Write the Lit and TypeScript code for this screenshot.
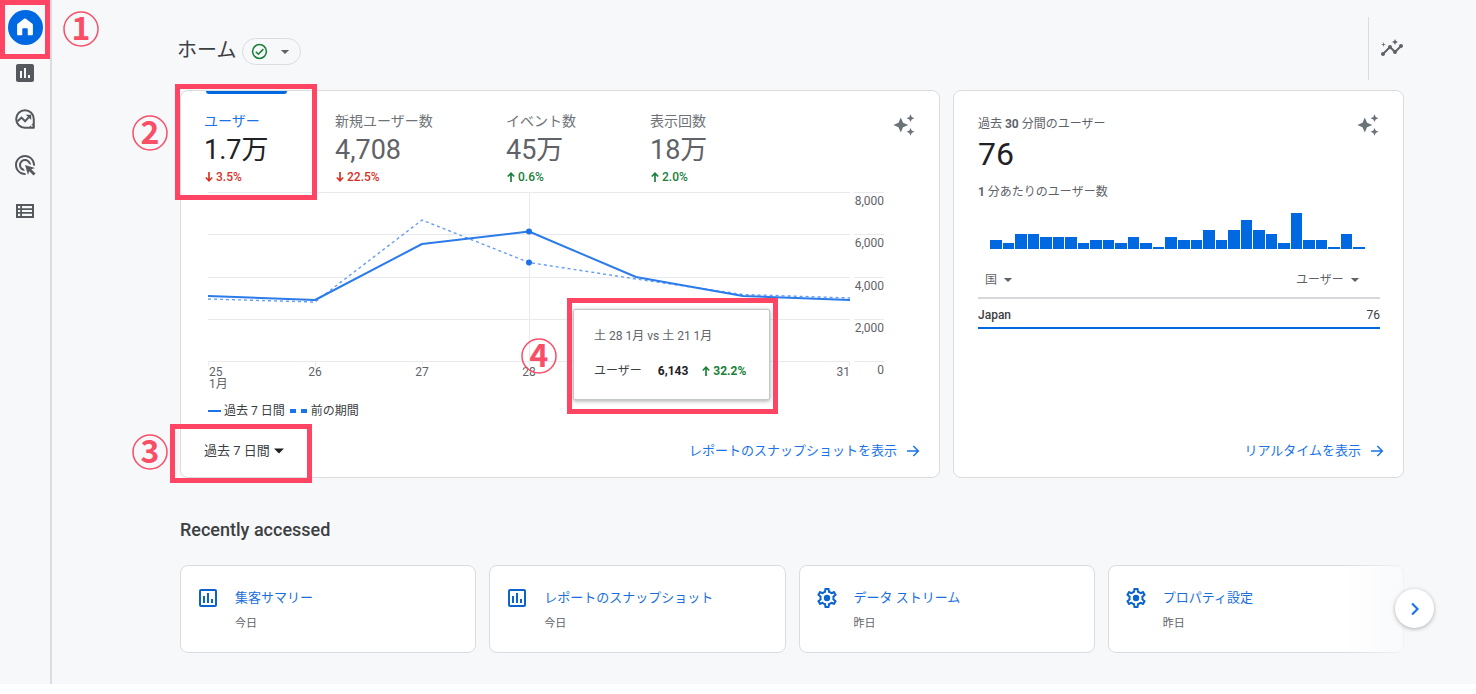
import { LitElement, html, css, svg } from "lit";
import { customElement } from "lit/decorators.js";
import { classMap } from "lit/directives/class-map.js";

const ICONS = {
  home: svg`<path fill-rule="evenodd" d="M12 2.6a1.6 1.6 0 0 1 1 .35l7 5.5c.4.3.6.75.6 1.25V20a1 1 0 0 1-1 1H15v-6.6a1 1 0 0 0-1-1h-4a1 1 0 0 0-1 1V21H4.4a1 1 0 0 1-1-1V9.7c0-.5.2-.95.6-1.25l7-5.5a1.6 1.6 0 0 1 1-.35z"/>`,
  reports: svg`<path d="M19 3H5c-1.1 0-2 .9-2 2v14c0 1.1.9 2 2 2h14c1.1 0 2-.9 2-2V5c0-1.1-.9-2-2-2zM9 17H7v-7h2v7zm4 0h-2V7h2v10zm4 0h-2v-3h2v3z"/>`,
  explore: svg`<path fill="none" stroke="currentColor" stroke-width="2" stroke-linejoin="round" d="M12 3.2a8.8 8.8 0 1 0 0 17.6h8.8V12A8.8 8.8 0 0 0 12 3.2z"/><path fill="none" stroke="currentColor" stroke-width="2" d="M4.5 14.2l4-3.6 3.6 3.6 4.2-4.6"/><path d="M12.8 7.7h5.4v5.4zM20.8 15.5v5.3h-5.3z"/><circle cx="18.8" cy="18.8" r=".9" fill="#f7f8fa"/>`,
  ads: svg`<path d="M11.71 17.99C8.53 17.84 6 15.22 6 12c0-3.31 2.69-6 6-6 3.22 0 5.84 2.53 5.99 5.71l-2.1-.63C15.48 9.31 13.89 8 12 8c-2.21 0-4 1.79-4 4 0 1.89 1.31 3.48 3.08 3.89l.63 2.1zM22 12c0 .3-.01.6-.04.9l-1.97-.59C20 12.21 20 12.1 20 12c0-4.42-3.58-8-8-8s-8 3.58-8 8 3.58 8 8 8c.1 0 .21 0 .31-.01l.59 1.97c-.3.03-.6.04-.9.04C6.48 22 2 17.52 2 12S6.48 2 12 2s10 4.48 10 10zm-3.77 4.26L22 15l-10-3 3 10 1.26-3.77 4.27 4.27 1.98-1.98-4.28-4.26z"/>`,
  table: svg`<path fill-rule="evenodd" d="M3 5h18v14H3zM5 7v2.2h2.2V7zm4 0v2.2h10V7zM5 10.9v2.2h2.2v-2.2zm4 0v2.2h10v-2.2zM5 14.8V17h2.2v-2.2zm4 0V17h10v-2.2z"/>`,
  sparkle: svg`<path d="M8.800 4.500l2.300 5.200 5.200 2.300-5.200 2.300-2.300 5.200-2.300-5.200L1.300 12l5.200-2.300zM18.500 1.300l1.200 2.700 2.700 1.200-2.700 1.200-1.200 2.700-1.200-2.700-2.700-1.200 2.700-1.200zM18.500 14.900l1.200 2.700 2.700 1.200-2.700 1.200-1.200 2.700-1.200-2.700-2.700-1.200 2.700-1.200z"/>`,
  insights: svg`<path d="M21 8c-1.450 0-2.260 1.440-1.930 2.510l-3.550 3.560c-.3-.09-.74-.09-1.040 0l-2.550-2.550C12.270 10.450 11.460 9 10 9c-1.450 0-2.270 1.440-1.930 2.520l-4.560 4.550C2.440 15.740 1 16.550 1 18c0 1.100.9 2 2 2 1.450 0 2.260-1.440 1.930-2.510l4.550-4.560c.3.09.74.09 1.040 0l2.550 2.550C12.730 16.550 13.540 18 15 18c1.450 0 2.270-1.440 1.930-2.520l3.560-3.550C21.560 12.260 23 11.450 23 10c0-1.100-.9-2-2-2z"/><path d="M15 9l.94-2.070L18 6l-2.060-.93L15 3l-.92 2.070L12 6l2.080.93zM3.500 11L4 9l2-.5L4 8l-.5-2L3 8l-2 .5L3 9z"/>`,
  chartOutline: svg`<path d="M9 17H7v-7h2v7zm4 0h-2V7h2v10zm4 0h-2v-4h2v4z"/><rect x="4" y="4" width="16" height="16" rx="1" fill="none" stroke="currentColor" stroke-width="2"/>`,
  gear: svg`<path d="M19.430 12.980c.04-.32.07-.64.07-.98 0-.34-.03-.66-.07-.98l2.110-1.650c.19-.15.24-.42.12-.64l-2-3.460c-.09-.16-.26-.25-.44-.25-.06 0-.12.01-.17.03l-2.490 1c-.52-.4-1.080-.73-1.690-.98l-.38-2.650C14.460 2.180 14.250 2 14 2h-4c-.25 0-.46.18-.49.42l-.38 2.650c-.61.25-1.170.59-1.690.98l-2.490-1c-.06-.02-.12-.03-.18-.03-.17 0-.34.09-.43.25l-2 3.460c-.13.22-.07.49.12.64l2.110 1.650c-.04.32-.07.65-.07.98 0 .33.03.66.07.98l-2.110 1.650c-.19.15-.24.42-.12.64l2 3.460c.09.16.26.25.44.25.06 0 .12-.01.17-.03l2.490-1c.52.4 1.080.73 1.690.98l.38 2.650c.03.24.24.42.49.42h4c.25 0 .46-.18.49-.42l.38-2.650c.61-.25 1.170-.59 1.690-.98l2.490 1c.06.02.12.03.18.03.17 0 .34-.09.43-.25l2-3.460c.12-.22.07-.49-.12-.64l-2.110-1.650zm-1.980-1.710c.04.31.05.52.05.73 0 .21-.02.43-.05.73l-.14 1.130.89.7 1.080.84-.7 1.210-1.270-.51-1.040-.42-.9.68c-.43.32-.84.56-1.250.73l-1.060.43-.16 1.130-.2 1.350h-1.400l-.19-1.350-.16-1.130-1.060-.43c-.43-.18-.83-.41-1.230-.71l-.91-.7-1.060.43-1.270.51-.7-1.210 1.080-.84.89-.7-.14-1.130c-.03-.31-.05-.54-.05-.74s.02-.43.05-.73l.14-1.130-.89-.7-1.080-.84.7-1.210 1.270.51 1.040.42.9-.68c.43-.32.84-.56 1.250-.73l1.060-.43.16-1.130.2-1.350h1.390l.19 1.350.16 1.130 1.060.43c.43.18.83.41 1.230.71l.91.7 1.060-.43 1.270-.51.7 1.210-1.070.85-.89.7.14 1.130z"/><circle cx="12" cy="12" r="3.200"/>`,
  arrow: svg`<path fill="none" stroke="currentColor" stroke-width="2.200" d="M3 12h16.500M12.500 4.500L20 12l-7.500 7.500"/>`,
  chevron: svg`<path fill="none" stroke="currentColor" stroke-width="2.600" d="M8.500 5.500L15 12l-6.500 6.500"/>`,
  check: svg`<circle cx="12" cy="12" r="9.800" fill="none" stroke="currentColor" stroke-width="2.200"/><path fill="none" stroke="currentColor" stroke-width="2.200" d="M6.800 12.300l3.600 3.500 7-7.200"/>`,
  caret: svg`<path d="M2 7h20L12 17z"/>`,
  up: svg`<path d="M12 0l9 9.500-2.500 2.500-4.500-4V24h-4V8l-4.500 4L3 9.500z"/>`,
  down: svg`<path d="M12 24l9-9.500-2.500-2.500-4.500 4V0h-4v16l-4.500-4L3 14.500z"/>`,
};

type IconName = keyof typeof ICONS;

const icon = (name: IconName, cls = "") =>
  html`<svg class="icon ${cls}" viewBox="0 0 24 24" fill="currentColor" aria-hidden="true">${ICONS[name]}</svg>`;

const NAV: { icon: IconName; label: string }[] = [
  { icon: "reports", label: "レポート" },
  { icon: "explore", label: "探索" },
  { icon: "ads", label: "広告" },
  { icon: "table", label: "設定" },
];

const METRICS = [
  { label: "ユーザー", value: "1.7万", delta: "3.5%", up: false },
  { label: "新規ユーザー数", value: "4,708", delta: "22.5%", up: false },
  { label: "イベント数", value: "45万", delta: "0.6%", up: true },
  { label: "表示回数", value: "18万", delta: "2.0%", up: true },
];

const PER_MINUTE = [
  9, 6, 15, 15, 12, 12, 12, 6, 9, 9, 6, 12, 6, 2, 12, 9, 9, 19, 9, 19, 29, 19, 15, 6, 36, 9, 9, 2, 15, 2,
];

const RECENT: { icon: IconName; title: string; when: string }[] = [
  { icon: "chartOutline", title: "集客サマリー", when: "今日" },
  { icon: "chartOutline", title: "レポートのスナップショット", when: "今日" },
  { icon: "gear", title: "データ ストリーム", when: "昨日" },
  { icon: "gear", title: "プロパティ設定", when: "昨日" },
];

@customElement("app-root")
export class AppRoot extends LitElement {
  static styles = css`
    :host {
      display: block;
      font-family: Roboto, "Noto Sans CJK JP", sans-serif;
      font-size: 12px;
      line-height: 16px;
      color: #5f6368;
      background: #fff;
    }
    * { box-sizing: border-box; }
    button, select {
      font: inherit;
      color: inherit;
      background: none;
      border: 0;
      margin: 0;
      padding: 0;
      cursor: pointer;
    }
    select { appearance: none; }
    a { color: #1a73e8; text-decoration: none; }
    h1, h2, p { margin: 0; font-weight: 400; }
    .icon { display: block; flex: none; width: 24px; height: 24px; }
    .small { width: 10px; height: 10px; }
    .mid { width: 16px; height: 16px; }

    .page {
      display: grid;
      grid-template-columns: 52px minmax(0, 1fr);
      background: #f7f8fa;
    }
    .side {
      border-right: 2px solid #dadce0;
      padding-top: 4px;
      position: relative;
    }
    .nav { display: flex; flex-direction: column; }
    .nav-item {
      display: grid;
      place-items: center;
      height: 46px;
      color: #55595e;
    }
    .home-disc {
      display: grid;
      place-items: center;
      width: 35px;
      height: 35px;
      border-radius: 50%;
      background: #0069e1;
      color: #fff;
    }
    .home-disc .icon { width: 22px; height: 22px; }

    .main { padding: 17px 72px 31px 128px; }
    .head { display: flex; align-items: center; height: 63px; }
    .title {
      font-size: 20px;
      line-height: 28px;
      color: #3c4043;
      margin-left: -3px;
      padding-top: 3px;
    }
    .status {
      display: flex;
      align-items: center;
      gap: 12px;
      height: 27px;
      padding: 0 10px 0 8px;
      margin: 6px auto 0 6px;
      border: 1px solid #dadce0;
      border-radius: 14px;
    }
    .status .check { width: 17px; height: 17px; color: #188038; }
    .tools {
      display: flex;
      align-items: center;
      height: 63px;
      padding: 0 0 2px 11px;
      border-left: 1px solid #dadce0;
    }

    .cards {
      display: grid;
      grid-template-columns: minmax(0, 760fr) minmax(0, 451fr);
      gap: 13px;
      margin-top: 10px;
    }
    .card {
      position: relative;
      display: flex;
      flex-direction: column;
      background: #fff;
      border: 1px solid #dadce0;
      border-radius: 8px;
    }
    .overview { padding: 0 18px 16px 23px; }
    .realtime { padding: 25px 18px 16px 24px; }
    .card-head { display: flex; justify-content: space-between; }
    .spark { color: #6b737a; }
    .overview .spark { margin: 22px 5px auto 0; }
    .metrics { display: grid; grid-template-columns: 131px 171px 144px auto; }
    .metric {
      display: flex;
      flex-direction: column;
      justify-self: start;
      text-align: left;
      padding: 20px 0 7px;
      position: relative;
      min-width: 83px;
    }
    .metric.on::before {
      content: "";
      position: absolute;
      inset: 0 0 auto 2px;
      height: 3px;
      border-radius: 0 0 3px 3px;
      background: #0069e1;
    }
    .metric-label { font-size: 14px; line-height: 20px; color: #6f7377; }
    .metric-value { font-size: 27px; line-height: 37px; padding-top: 1px; }
    .on .metric-label { color: #1a73e8; }
    .on .metric-value { color: #202124; }
    .delta {
      display: flex;
      align-items: center;
      gap: 2px;
      font-weight: 500;
      color: #d93025;
    }
    .delta.up { color: #188038; }

    .chart {
      position: relative;
      display: grid;
      grid-template-columns: minmax(0, 1fr) 30px;
      column-gap: 4px;
      margin: 0 37px 0 4px;
    }
    .plot { display: block; width: 100%; height: 170px; overflow: visible; }
    .y-axis { display: grid; grid-template-rows: 42px 43px 42px 42px 18px; text-align: right; }
    .y-axis span { border-top: 1px solid #e8eaed; }
    .x-axis {
      display: grid;
      grid-template-columns: repeat(12, minmax(0, 1fr));
      line-height: 12px;
      text-align: center;
      padding-top: 5px;
      margin-top: -18px;
    }
    .x-axis span { grid-column: span 2; }
    .x-axis .first { grid-column: span 1; text-align: left; padding-left: 1px; }
    .x-axis .last { grid-column: 12; text-align: right; }
    .tip {
      position: absolute;
      left: 54%;
      top: 117px;
      width: 197px;
      padding: 18px 20px 20px;
      background: #fff;
      border: 1px solid #c4c7ca;
      border-radius: 2px;
      box-shadow: 0 1px 4px rgba(0, 0, 0, 0.35);
    }
    .tip-row { display: flex; align-items: center; margin-top: 19px; color: #3c4043; }
    .tip-row b { margin: 0 13px 0 16px; color: #202124; }
    .tip-row .delta { font-weight: 700; }

    .legend { display: flex; align-items: center; gap: 3px; margin: 13px 0 0 4px; color: #3c4043; }
    .key { width: 13px; height: 2px; background: #1a73e8; }
    .key.dash {
      width: 17px;
      height: 4px;
      margin: 0 1px 0 2px;
      background: linear-gradient(90deg, #1a73e8 6px, transparent 6px 11px, #1a73e8 11px);
    }
    .foot {
      display: flex;
      align-items: center;
      justify-content: space-between;
      margin-top: auto;
      padding-top: 22px;
      font-size: 13px;
      line-height: 20px;
    }
    .pick { display: flex; align-items: center; gap: 5px; }
    .range { color: #3c4043; gap: 3px; }
    .range .icon { width: 12px; height: 12px; color: #202124; }
    .more { display: flex; align-items: center; gap: 8px; margin-left: auto; }

    .count { font-size: 32px; line-height: 44px; color: #202124; }
    .strong { font-weight: 700; }
    .realtime .card-head + p { margin-top: 8px; }
    .realtime .spark { margin: -3px 5px auto 0; }
    .bars {
      display: flex;
      align-items: flex-end;
      gap: 1px;
      height: 36px;
      margin: 13px 20px 0 12px;
    }
    .bar { flex: 1; background: #0069e1; }
    .places {
      width: calc(100% - 5px);
      border-collapse: collapse;
      margin-top: 23px;
    }
    .places th { padding: 0 20px 9px 7px; font-weight: 400; border-bottom: 2px solid #d5d7da; }
    .places th:last-child .pick { justify-content: flex-end; }
    .places td { padding: 8px 0 4px; border-bottom: 2px solid #0069e1; color: #3c4043; }
    .places td:first-child { font-weight: 500; }
    .places td:last-child { text-align: right; }

    .section { font-size: 18px; line-height: 24px; font-weight: 500; color: #3c4043; margin: 40px 0 23px; }
    .recent {
      position: relative;
      display: grid;
      grid-template-columns: repeat(4, minmax(0, 1fr));
      gap: 13px;
    }
    .recent-card {
      display: grid;
      grid-template-columns: 24px minmax(0, 1fr);
      column-gap: 15px;
      height: 88px;
      padding: 20px 15px;
      background: #fff;
      border: 1px solid #dadce0;
      border-radius: 8px;
      color: #5f6368;
    }
    .recent-card .icon { color: #0b63ce; }
    .recent-name { font-size: 13px; line-height: 24px; color: #1a6fdc; }
    .recent-when { grid-column: 2; font-size: 11px; line-height: 16px; margin-top: 5px; }
    .fade {
      position: absolute;
      inset: 0 0 0 auto;
      width: 60px;
      background: linear-gradient(90deg, rgba(247, 248, 250, 0), rgba(247, 248, 250, 0.8));
      pointer-events: none;
    }
    .next {
      position: absolute;
      right: -30px;
      top: 24px;
      display: grid;
      place-items: center;
      width: 39px;
      height: 39px;
      border-radius: 50%;
      background: #fff;
      color: #1a73e8;
      box-shadow: 0 1px 4px rgba(0, 0, 0, 0.3);
    }
    .next .icon { width: 20px; height: 20px; }

    .frame {
      position: absolute;
      border: 5px solid #ff4563;
      pointer-events: none;
    }
    .num {
      position: absolute;
      display: grid;
      place-items: center;
      width: 36px;
      height: 36px;
      padding-bottom: 5px;
      font-family: "Noto Sans CJK JP", sans-serif;
      font-size: 32px;
      line-height: 31px;
      font-weight: 700;
      color: #f84f67;
      pointer-events: none;
    }
    .num svg { position: absolute; inset: 0; }
    .frame-home { left: 0; top: 0; width: 50px; height: 59px; }
    .num-home { left: 63px; top: 11px; }
    .frame-metric { left: -6px; top: -7px; width: 142px; height: 116px; }
    .num-metric { left: -49px; top: 24px; }
    .frame-range { left: -11px; bottom: -6px; width: 142px; height: 59px; }
    .num-range { left: -49px; bottom: 7px; }
    .frame-tip { left: -7px; top: -12px; width: 211px; height: 116px; }
    .num-tip { left: -53px; top: 28px; }
  `;

  private callout(n: number, where: string) {
    return html`<div class="frame frame-${where}"></div>
      <div class="num num-${where}">
        <svg viewBox="0 0 36 36" fill="none" stroke="#f84f67" stroke-width="1.5" aria-hidden="true">
          <circle cx="18" cy="18" r="17" />
        </svg>
        <span>${n}</span>
      </div>`;
  }

  private delta(text: string, up: boolean) {
    return html`<span class=${classMap({ delta: true, up })}>${icon(up ? "up" : "down", "small")}${text}</span>`;
  }

  private pick(label: string, cls = "") {
    return html`<label class="pick ${cls}">
      <select aria-label=${label}><option>${label}</option></select>${icon("caret", "small")}
    </label>`;
  }

  private chart() {
    return html`<div class="chart">
      <svg class="plot" viewBox="0 0 642 170" preserveAspectRatio="none" role="img" aria-label="ユーザー">
        <path d="M0 .5H642M0 42.500H642M0 85.500H642M0 127.500H642M0 169.500H642M.5 170v4M107.500 170v4M214.500 170v4M321.500 0v174M641.500 170v4"
          fill="none" stroke="#e8eaed" vector-effect="non-scaling-stroke" />
        <polyline points="0,107 107,110 214,28 321,70.500 428,87 535,102.500 642,106" fill="none" stroke="#669df6"
          stroke-width="1.400" stroke-dasharray="3 3" vector-effect="non-scaling-stroke" />
        <polyline points="0,104 107,108 214,52 321,39.500 428,85 535,104 642,108" fill="none" stroke="#2b7bea"
          stroke-width="2" stroke-linejoin="round" vector-effect="non-scaling-stroke" />
        <circle cx="321" cy="39.500" r="3" fill="#1a73e8" />
        <circle cx="321" cy="70.500" r="3" fill="#1a73e8" />
      </svg>
      <div class="y-axis">
        <span>8,000</span><span>6,000</span><span>4,000</span><span>2,000</span><span>0</span>
      </div>
      <div class="x-axis">
        <span class="first">25<br />1月</span><span>26</span><span>27</span><span>28</span>
        <span class="last">31</span>
      </div>
      <div class="tip">
        <p>土 28 1月 vs 土 21 1月</p>
        <div class="tip-row">ユーザー<b>6,143</b>${this.delta("32.2%", true)}</div>
        ${this.callout(4, "tip")}
      </div>
    </div>`;
  }

  render() {
    return html`<div class="page">
      <aside class="side">
        <nav class="nav">
          <a class="nav-item" href="#" aria-label="ホーム"><span class="home-disc">${icon("home")}</span></a>
          ${NAV.map((n) => html`<a class="nav-item" href="#" aria-label=${n.label}>${icon(n.icon)}</a>`)}
        </nav>
        ${this.callout(1, "home")}
      </aside>
      <main class="main">
        <header class="head">
          <h1 class="title">ホーム</h1>
          <button class="status" aria-label="ステータス">${icon("check", "check")}${icon("caret", "small")}</button>
          <div class="tools"><button aria-label="Insights">${icon("insights")}</button></div>
        </header>
        <div class="cards">
          <section class="card overview">
            <div class="card-head">
              <div class="metrics">
                ${METRICS.map(
                  (m, i) => html`<button class=${classMap({ metric: true, on: i === 0 })}>
                    <span class="metric-label">${m.label}</span>
                    <span class="metric-value">${m.value}</span>
                    ${this.delta(m.delta, m.up)}
                  </button>`
                )}
              </div>
              <button class="spark" aria-label="Insights">${icon("sparkle")}</button>
            </div>
            ${this.chart()}
            <div class="legend">
              <span class="key"></span>過去 7 日間<span class="key dash"></span>前の期間
            </div>
            <div class="foot">
              ${this.pick("過去 7 日間", "range")}
              <a class="more" href="#">レポートのスナップショットを表示${icon("arrow", "mid")}</a>
            </div>
            ${this.callout(2, "metric")} ${this.callout(3, "range")}
          </section>
          <section class="card realtime">
            <div class="card-head">
              <div>
                <p>過去 <span class="strong">30</span> 分間のユーザー</p>
                <p class="count">76</p>
              </div>
              <button class="spark" aria-label="Insights">${icon("sparkle")}</button>
            </div>
            <p><span class="strong">1</span> 分あたりのユーザー数</p>
            <div class="bars">
              ${PER_MINUTE.map((h) => html`<div class="bar" style="height:${h}px"></div>`)}
            </div>
            <table class="places">
              <thead><tr><th>${this.pick("国")}</th><th>${this.pick("ユーザー")}</th></tr></thead>
              <tbody><tr><td>Japan</td><td>76</td></tr></tbody>
            </table>
            <div class="foot"><a class="more" href="#">リアルタイムを表示${icon("arrow", "mid")}</a></div>
          </section>
        </div>
        <h2 class="section">Recently accessed</h2>
        <div class="recent">
          ${RECENT.map(
            (r) => html`<a class="recent-card" href="#">
              ${icon(r.icon)}<span class="recent-name">${r.title}</span><span class="recent-when">${r.when}</span>
            </a>`
          )}
          <div class="fade"></div>
          <button class="next" aria-label="次へ">${icon("chevron")}</button>
        </div>
      </main>
    </div>`;
  }
}
